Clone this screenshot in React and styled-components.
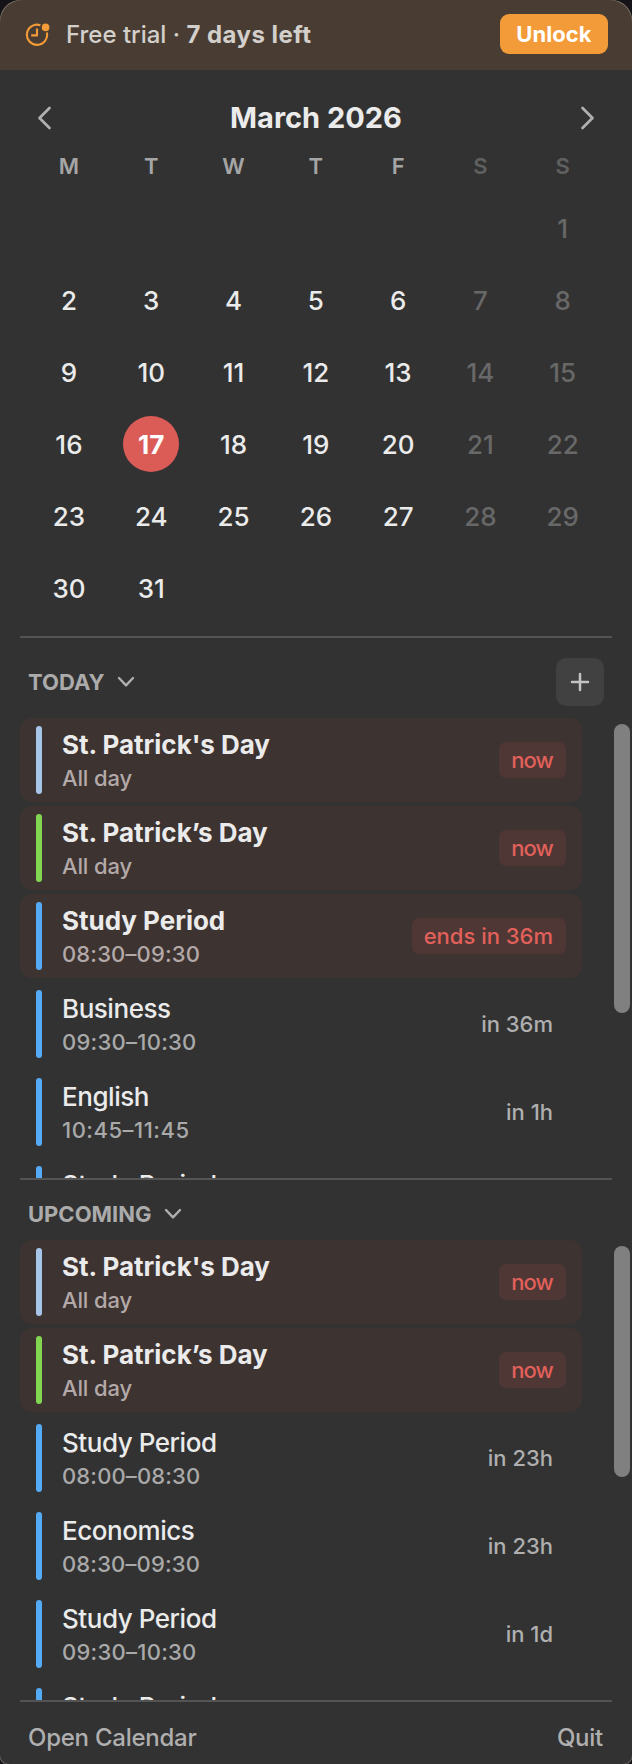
import React from "react";
import styled, { createGlobalStyle } from "styled-components";

const GlobalStyle = createGlobalStyle`
  * { box-sizing: border-box; }
  body { margin: 0; background: #151318; }
`;

const Panel = styled.main`
  position: relative;
  display: flex;
  flex-direction: column;
  width: 632px;
  height: 1764px;
  overflow: hidden;
  background: #323232;
  border-radius: 20px 20px 6px 6px;
  font-family: Inter, "Liberation Sans", sans-serif;
  color: #ebebeb;

  /* light rim that shows on the rounded corners only */
  &::after {
    content: "";
    position: absolute;
    inset: -1px;
    border: 1px solid #77716b;
    border-radius: 24px 24px 10px 10px;
    pointer-events: none;
  }
`;

const Banner = styled.header`
  display: flex;
  align-items: center;
  height: 70px;
  padding: 0 24px 2px 25px;
  background: #493d33;
`;

const TrialText = styled.span`
  flex: 1;
  margin: 2px 0 0 16px;
  font-size: 24px;
  font-weight: 450;
  line-height: 30px;
  color: #d3cfcb;

  b {
    font-weight: 700;
    letter-spacing: 0.45px;
  }
`;

const UnlockButton = styled.button`
  width: 108px;
  height: 40px;
  padding: 0;
  border: 0;
  border-radius: 9px;
  background: #f39b38;
  color: #fff;
  font: 700 22px/40px Inter, sans-serif;
  letter-spacing: 0.05px;
`;

const MonthBar = styled.div`
  display: flex;
  align-items: center;
  justify-content: space-between;
  height: 62px;
  margin-top: 17px;
  padding: 0 36px;
`;

const MonthTitle = styled.h1`
  margin: 0;
  font-size: 29px;
  font-weight: 700;
  line-height: 36px;
  letter-spacing: 0;
`;

const WeekGrid = styled.div`
  display: grid;
  grid-template-columns: repeat(7, 82.3px);
  padding-left: 27.8px;
`;

const Weekday = styled.div`
  height: 43px;
  padding-top: 3px;
  text-align: center;
  font-size: 22px;
  font-weight: 600;
  line-height: 28px;
  color: ${(p) => (p.$weekend ? "#606060" : "#a5a5a5")};
`;

const DayCell = styled.div`
  display: flex;
  align-items: center;
  justify-content: center;
  height: 72px;
`;

const DayNumber = styled.span`
  width: 56px;
  height: 56px;
  border-radius: 50%;
  text-align: center;
  line-height: 58px;
  font-size: 26px;
  font-weight: ${(p) => (p.$today ? 700 : 500)};
  color: ${(p) => (p.$today ? "#fff" : p.$weekend ? "#686868" : "#ebebeb")};
  background: ${(p) => (p.$today ? "#db5c57" : "transparent")};
`;

const Divider = styled.hr`
  flex: none;
  width: 592px;
  height: 2px;
  margin: ${(p) => p.$top || 0}px 20px 0;
  border: 0;
  background: #545454;
`;

const SectionHeader = styled.div`
  display: flex;
  align-items: center;
  flex: none;
  height: ${(p) => p.$height}px;
  padding: 8px 28px 0;
`;

const SectionTitle = styled.h2`
  margin: 0 12px 0 0;
  font-size: 22px;
  font-weight: 650;
  line-height: 28px;
  letter-spacing: 0;
  color: #ababab;
`;

const AddButton = styled.button`
  display: grid;
  place-items: center;
  width: 48px;
  height: 48px;
  margin-left: auto;
  padding: 0;
  border: 0;
  border-radius: 10px;
  background: #414141;
`;

const ScrollArea = styled.section`
  display: flex;
  flex: none;
  justify-content: space-between;
  height: 460px;
  padding: 0 2px 0 20px;
  overflow: hidden;
`;

const EventList = styled.div`
  display: flex;
  flex-direction: column;
  gap: 4px;
  width: 562px;
`;

const ScrollThumb = styled.div`
  width: 16px;
  height: ${(p) => p.$height}px;
  margin-top: 6px;
  border-radius: 8px;
  background: #808080;
`;

const EventRow = styled.article`
  display: flex;
  align-items: center;
  flex: none;
  height: 84px;
  padding: 0 16px;
  border-radius: 12px;
  background: ${(p) => (p.$active ? "#3d3331" : "transparent")};
`;

const CalendarBar = styled.div`
  width: 6px;
  height: 68px;
  margin-right: 20px;
  border-radius: 3px;
  background: ${(p) => p.$color};
`;

const EventInfo = styled.div`
  flex: 1;
  padding-top: 2px;
`;

const EventTitle = styled.div`
  font-size: 26px;
  font-weight: ${(p) => (p.$active ? 650 : 450)};
  line-height: 34px;
  letter-spacing: ${(p) => (p.$active ? "-0.02px" : "-0.45px")};
`;

const EventTime = styled.div`
  font-size: 22px;
  font-weight: 450;
  line-height: 32px;
  letter-spacing: ${(p) => p.$spacing}px;
  color: ${(p) => (p.$active ? "#b3a9a8" : "#a9a9a9")};
`;

const Badge = styled.div`
  height: 36px;
  padding: 0 13px 0 12px;
  border-radius: 7px;
  font-size: 22px;
  font-weight: 450;
  line-height: 36px;
  letter-spacing: ${(p) => (p.$short ? -0.85 : 0)}px;
  color: ${(p) => (p.$active ? "#e2605a" : "#afafaf")};
  background: ${(p) => (p.$active ? "#4e3735" : "transparent")};
`;

const Footer = styled.footer`
  display: flex;
  justify-content: space-between;
  align-items: center;
  flex: 1;
  padding: 9px 29px 0 28px;
  font-size: 24px;
  font-weight: 450;
  letter-spacing: -0.25px;
  color: #afafaf;
`;

const Stroke = ({ w, h, d, width = 2.7, color = "#b0b0b0" }) => (
  <svg width={w} height={h} viewBox={`0 0 ${w} ${h}`} fill="none" stroke={color} strokeWidth={width} strokeLinecap="round" strokeLinejoin="round">
    <path d={d} />
  </svg>
);

const TrialIcon = () => (
  <svg width="25" height="24" viewBox="0 0 25 24" fill="none" stroke="#f39b38" strokeWidth="2.1" strokeLinejoin="round">
    <path d="M15.4 3.3A10.1 10.1 0 1 0 21.8 10.4M12 6.4v7H6.2" />
    <circle cx="20.6" cy="5.4" r="3.8" fill="#f39b38" stroke="none" />
  </svg>
);

const Chevron = () => <Stroke w={18} h={12} d="M2 2l7 7.3L16 2" width={2.4} />;

const BLUE = "#55aaf5";
const PALE = "#a6c5e8";
const GREEN = "#83d651";

const holidays = [
  { title: "St. Patrick's Day", time: "All day", badge: "now", color: PALE, active: true },
  { title: "St. Patrick’s Day", time: "All day", badge: "now", color: GREEN, active: true },
];
const today = [
  ...holidays,
  { title: "Study Period", time: "08:30–09:30", badge: "ends in 36m", color: BLUE, active: true },
  { title: "Business", time: "09:30–10:30", badge: "in 36m", color: BLUE },
  { title: "English", time: "10:45–11:45", badge: "in 1h", color: BLUE },
  { title: "Study Period", time: "", badge: "", color: BLUE },
];
const upcoming = [
  ...holidays,
  { title: "Study Period", time: "08:00–08:30", badge: "in 23h", color: BLUE },
  { title: "Economics", time: "08:30–09:30", badge: "in 23h", color: BLUE },
  { title: "Study Period", time: "09:30–10:30", badge: "in 1d", color: BLUE },
  { title: "Study Period", time: "", badge: "", color: BLUE },
];

// Narrow "1" glyphs get a little more tracking so that the times line up.
const timeSpacing = (time) =>
  time.includes(":") ? 0.14 + 0.12 * (time.split("1").length - 1) : -0.15;

const Events = ({ items, thumb }) => (
  <ScrollArea>
    <EventList>
      {items.map((e, i) => (
        <EventRow key={i} $active={e.active}>
          <CalendarBar $color={e.color} />
          <EventInfo>
            <EventTitle $active={e.active}>{e.title}</EventTitle>
            <EventTime $active={e.active} $spacing={timeSpacing(e.time)}>{e.time || "\u00a0"}</EventTime>
          </EventInfo>
          <Badge $active={e.active} $short={e.badge === "now"}>{e.badge}</Badge>
        </EventRow>
      ))}
    </EventList>
    <ScrollThumb $height={thumb} />
  </ScrollArea>
);

const cells = Array.from({ length: 42 }, (_, i) => {
  const day = i - 5;
  return day >= 1 && day <= 31 ? day : null;
});

export default function App() {
  return (
    <>
      <GlobalStyle />
      <Panel>
        <Banner>
          <TrialIcon />
          <TrialText>Free trial · <b>7 days left</b></TrialText>
          <UnlockButton>Unlock</UnlockButton>
        </Banner>
        <MonthBar>
          <Stroke w={18} h={26} d="M13.5 3L3.5 13l10 10" />
          <MonthTitle>March 2026</MonthTitle>
          <Stroke w={18} h={26} d="M4.5 3l10 10-10 10" />
        </MonthBar>
        <WeekGrid>
          {["M", "T", "W", "T", "F", "S", "S"].map((d, i) => (
            <Weekday key={i} $weekend={i > 4}>{d}</Weekday>
          ))}
          {cells.map((day, i) => (
            <DayCell key={i}>
              {day && <DayNumber $today={day === 17} $weekend={i % 7 > 4}>{day}</DayNumber>}
            </DayCell>
          ))}
        </WeekGrid>
        <Divider $top={12} />
        <SectionHeader $height={80}>
          <SectionTitle>TODAY</SectionTitle>
          <Chevron />
          <AddButton><Stroke w={20} h={20} d="M10 2v16M2 10h16" width={2.5} color="#c4c4c4" /></AddButton>
        </SectionHeader>
        <Events items={today} thumb={289} />
        <Divider />
        <SectionHeader $height={60}>
          <SectionTitle>UPCOMING</SectionTitle>
          <Chevron />
        </SectionHeader>
        <Events items={upcoming} thumb={231} />
        <Divider />
        <Footer>
          <span>Open Calendar</span>
          <span>Quit</span>
        </Footer>
      </Panel>
    </>
  );
}
